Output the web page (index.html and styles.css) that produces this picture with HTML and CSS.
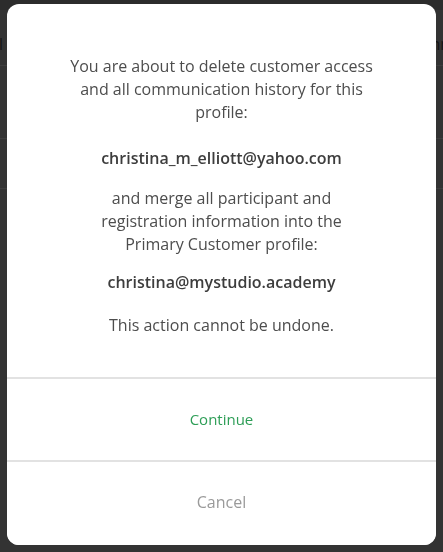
FILE: index.html
```html
<!DOCTYPE html>
<html>
<head>
<meta charset="utf-8">
<link rel="stylesheet" href="styles.css">
</head>
<body>
<div class="page">
  <div class="topbar"></div>
  <div class="row head"><span class="ghost left">Total</span><span class="ghost right">mm</span></div>
  <div class="row r2"></div>
  <div class="row r3"></div>
</div>
<div class="overlay">
  <div class="modal">
    <div class="content">
      <p class="msg">You are about to delete customer access and all communication history for this profile:</p>
      <p class="email">christina_m_elliott@yahoo.com</p>
      <p class="msg">and merge all participant and<br>registration information into the<br>Primary Customer profile:</p>
      <p class="email">christina@mystudio.academy</p>
      <p class="msg last">This action cannot be undone.</p>
    </div>
    <div class="actions">
      <button class="btn continue">Continue</button>
      <button class="btn cancel">Cancel</button>
    </div>
  </div>
</div>
</body>
</html>
```

FILE: styles.css
```css
* { box-sizing: border-box; }
html, body { margin: 0; padding: 0; }
body {
  width: 443px;
  height: 552px;
  overflow: hidden;
  background: #333333;
  font-family: "Open Sans", "Liberation Sans", sans-serif;
}
.page { display: flex; flex-direction: column; }
.topbar { height: 10px; background: #2c2c2c; }
.row { border-bottom: 1px solid #3e3e3e; position: relative; }
.head { height: 56px; display: flex; justify-content: space-between; align-items: flex-end; padding-bottom: 10px; }
.r2 { height: 73px; }
.r3 { height: 50px; }
.ghost { color: #151515; font-size: 16px; }
.left { margin-left: -34px; }
.right { margin-right: -12px; }
.overlay {
  position: fixed;
  inset: 0;
  display: flex;
  justify-content: center;
  align-items: flex-start;
  padding-top: 4px;
}
.modal {
  width: 429px;
  height: 541px;
  background: #ffffff;
  border-radius: 12px;
  display: flex;
  flex-direction: column;
  overflow: hidden;
}
.content {
  padding: 51px 56px 40px;
  text-align: center;
  color: #4d4d4d;
  font-size: 16px;
  line-height: 23px;
}
.content p { margin: 0; }
.email { font-weight: 600; color: #3d3d3d; margin: 23px 0 17px !important; }
.email + .msg + .email { margin: 15px 0 20px !important; }
.actions { display: flex; flex-direction: column; flex: 1; }
.btn {
  border: 0;
  border-top: 2px solid #e2e2e2;
  background: #fff;
  font-family: "Open Sans", "Liberation Sans", sans-serif;
  font-size: 15px;
  padding: 0;
}
.continue { height: 83px; color: #2e9e57; padding-bottom: 2px; }
.cancel { flex: 1; color: #9a9a9a; font-size: 16px; padding-bottom: 3px; }
```
